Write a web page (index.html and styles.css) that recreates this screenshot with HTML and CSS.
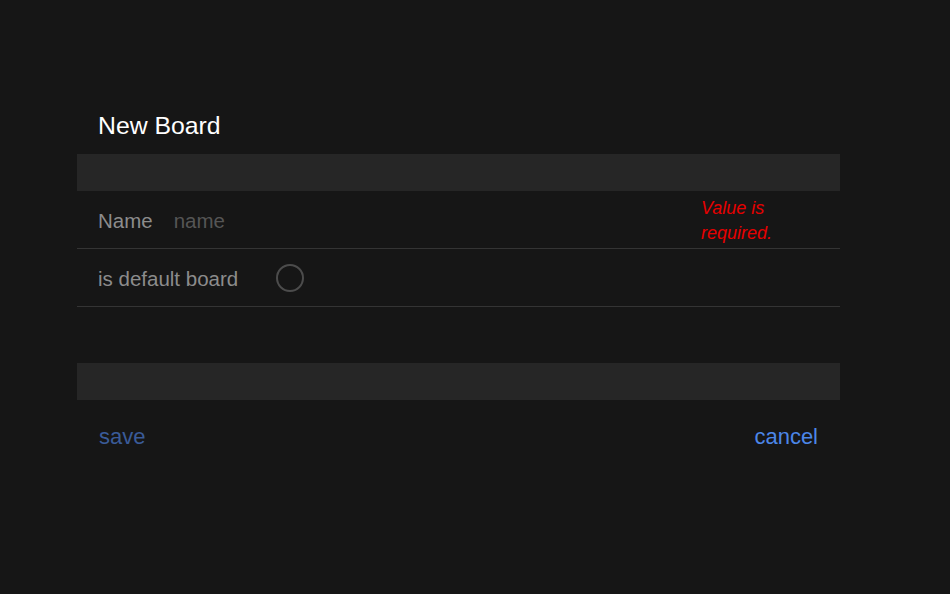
FILE: index.html
```html
<!DOCTYPE html>
<html>
<head>
    <title>New Board</title>
    <link rel="stylesheet" href="styles.css">
</head>
<body>

    <div class="dialog">
        <h2 class="dialog-title">New Board</h2>

        <div class="band"></div>

        <div class="row">
            <label class="row-label" for="name">Name</label>
            <input type="text" id="name" class="row-input" placeholder="name">
            <p class="error">Value is required.</p>
        </div>

        <div class="row">
            <span class="row-label default-label">is default board</span>
            <span class="radio"></span>
        </div>

        <div class="spacer"></div>

        <div class="band"></div>

        <div class="actions">
            <button class="btn save">save</button>
            <button class="btn cancel">cancel</button>
        </div>
    </div>

</body>
</html>
```

FILE: styles.css
```css
body {
    margin: 0;
    background-color: #161616;
    font-family: "Liberation Sans", Arial, sans-serif;
}

.dialog {
    width: 763px;
    margin-left: 77px;
    padding-top: 106px;
}

.dialog-title {
    margin: 0 0 8px 0;
    padding-left: 21px;
    font-size: 24.8px;
    font-weight: normal;
    line-height: 40px;
    color: #ffffff;
}

.band {
    height: 37px;
    background-color: #262626;
}

.row {
    display: flex;
    align-items: center;
    height: 55px;
    padding: 2px 0 0 21px;
    border-bottom: 1px solid #343434;
}

.row-label {
    font-size: 20.5px;
    color: #8c8c8c;
}

.row-input {
    flex: 1;
    margin-left: 21px;
    padding: 0;
    border: none;
    outline: none;
    background: transparent;
    font-family: "Liberation Sans", Arial, sans-serif;
    font-size: 20.5px;
    color: #cccccc;
}
.row-input::placeholder {
    color: #555555;
}

.error {
    width: 118px;
    margin: 0 21px 0 0;
    font-size: 18px;
    font-style: italic;
    line-height: 25px;
    color: #e60000;
}

.default-label {
    margin-right: 38px;
}

.radio {
    width: 24px;
    height: 24px;
    margin-top: -2px;
    border: 2px solid #4c4c4c;
    border-radius: 50%;
}

.spacer {
    height: 56px;
}

.actions {
    display: flex;
    justify-content: space-between;
    align-items: center;
    height: 70px;
    padding: 2px 22px 0 22px;
}

.btn {
    padding: 0;
    border: none;
    background: none;
    font-family: "Liberation Sans", Arial, sans-serif;
    font-size: 22px;
    cursor: pointer;
}

.save {
    color: #3a5b98;
}

.cancel {
    color: #4c86e8;
}
```
